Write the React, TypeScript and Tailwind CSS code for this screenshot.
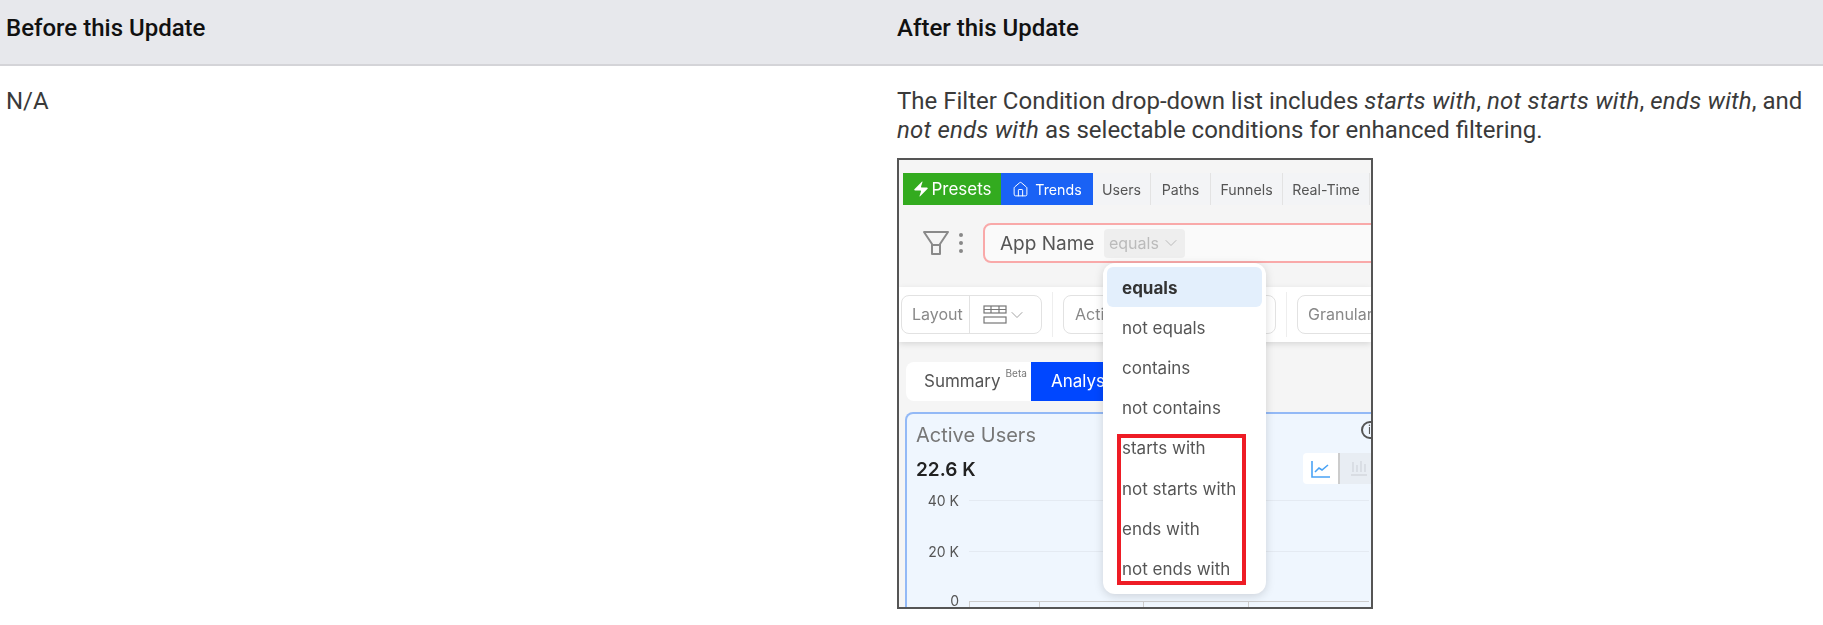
import { ChevronDown, Home, Zap } from "lucide-react";

const tabs = [
  { label: "Users", width: "w-[58px]" },
  { label: "Paths", width: "w-[60px]" },
  { label: "Funnels", width: "w-[72px]" },
  { label: "Real-Time", width: "w-[87px]" },
];

const conditions = [
  "equals",
  "not equals",
  "contains",
  "not contains",
  "starts with",
  "not starts with",
  "ends with",
  "not ends with",
];

function FilterIcon() {
  return (
    <svg className="shrink-0" width="28" height="26" viewBox="0 0 28 26" fill="none" stroke="#8a8a8a" strokeWidth="2">
      <path d="M2 2h24L18 14v10h-8V14z" strokeLinejoin="round" />
      <path d="M10 15h8" />
    </svg>
  );
}

function TableIcon() {
  return (
    <svg width="24" height="20" viewBox="0 0 24 20" fill="none" stroke="#777" strokeWidth="1.2">
      <rect x="1" y="1" width="22" height="7" />
      <path d="M1 4.5h22M8 1v7M16 1v7" />
      <rect x="1" y="12" width="22" height="6" />
    </svg>
  );
}

function ChartLineIcon() {
  return (
    <svg width="20" height="18" viewBox="0 0 20 18" fill="none" stroke="#4aa3f5" strokeWidth="1.6">
      <path d="M1 1v16h18" />
      <path d="M4 12l4-4 3 2 6-5" />
    </svg>
  );
}

function ChartBarIcon() {
  return (
    <svg width="18" height="18" viewBox="0 0 18 18" fill="none" stroke="#d4d8de" strokeWidth="1.4">
      <path d="M3 2v10M7 5v7M11 1v11M15 4v8M1 15h16" />
    </svg>
  );
}

function FilterMenu() {
  return (
    <div className="absolute left-[204px] top-[103px] w-[163px] h-[331px] rounded-xl bg-white p-[4px] shadow-[0_2px_10px_rgba(0,0,0,0.15)]">
      {conditions.map((c, i) => (
        <div
          key={c}
          className={`h-[40.2px] flex items-center pl-[15px] text-[17px] rounded-md ${
            i === 0 ? "bg-[#e3effc] font-bold text-[#333]" : "text-[#555]"
          }`}
        >
          <span className="translate-y-[1px]">{c}</span>
        </div>
      ))}
      <div className="absolute left-[14px] top-[171px] w-[129px] h-[151px] border-[4px] border-[#ee1c25]" />
    </div>
  );
}

function DashboardShot() {
  return (
    <div className="relative mt-[13px] w-[476px] h-[451px] border-2 border-[#555] bg-[#f5f5f5] overflow-hidden font-['Inter',sans-serif] blur-[0.4px]">
      {/* nav tabs */}
      <div className="ml-[4px] mt-[13px] flex h-[32px] text-[14.2px]">
        <div className="w-[98px] bg-[#33ab1f] text-white flex items-center justify-center gap-[1px] text-[17px]">
          <Zap size={18} fill="white" strokeWidth={0} />
          Presets
        </div>
        <div className="w-[92px] bg-[#1a62f5] text-white flex items-center justify-center gap-[6px]">
          <Home size={17} strokeWidth={1.4} />
          Trends
        </div>
        {tabs.map((t) => (
          <div
            key={t.label}
            className={`${t.width} bg-[#f3f4f6] border-r border-[#e3e3e3] text-[#555] flex items-center justify-center`}
          >
            {t.label}
          </div>
        ))}
      </div>

      {/* filter row */}
      <div className="flex items-center mt-[18px] ml-[23px] h-[40px]">
        <FilterIcon />
        <div className="ml-[9px] flex flex-col gap-[4px] shrink-0">
          <span className="size-[4px] rounded-full bg-[#888]" />
          <span className="size-[4px] rounded-full bg-[#888]" />
          <span className="size-[4px] rounded-full bg-[#888]" />
        </div>
        <div className="ml-[20px] w-[420px] h-[40px] shrink-0 flex items-center rounded-lg border-2 border-[#f9a9a9] bg-[#fafafa] pl-[15px] text-[19px] text-[#555]">
          App Name
          <span className="ml-[10px] h-[29px] w-[81px] flex items-center justify-center gap-[2px] rounded bg-[#eeeeee] text-[16px] text-[#bbb]">
            equals
            <ChevronDown size={20} strokeWidth={1.2} />
          </span>
        </div>
      </div>

      {/* toolbar */}
      <div className="mt-[24px] h-[55px] bg-white flex items-center pl-[2px] shadow-[0_2px_6px_rgba(0,0,0,0.12)] text-[16px] text-[#888]">
        <div className="w-[141px] h-[39px] rounded-lg border border-[#e2e2e2] flex items-center shrink-0">
          <span className="w-[68px] pl-[10px] border-r border-[#e2e2e2] h-full flex items-center">Layout</span>
          <span className="ml-[13px] flex items-center text-[#999]">
            <TableIcon />
            <ChevronDown size={20} strokeWidth={1.1} />
          </span>
        </div>
        <div className="ml-[10px] w-px h-[45px] bg-[#eeeeee] shrink-0" />
        <div className="ml-[10px] w-[213px] h-[39px] rounded-lg border border-[#e2e2e2] flex items-center pl-[11px] shrink-0">
          Acti
        </div>
        <div className="ml-[10px] w-px h-[45px] bg-[#eeeeee] shrink-0" />
        <div className="ml-[10px] w-[120px] h-[39px] rounded-l-lg border border-[#e2e2e2] flex items-center pl-[10px] shrink-0">
          Granular
        </div>
      </div>

      {/* summary tabs */}
      <div className="ml-[7px] mt-[20px] flex h-[39px] text-[17px]">
        <div className="w-[125px] bg-white rounded-l-lg text-[#555] flex items-center pl-[18px]">
          Summary
          <sup className="ml-[5px] -mt-[8px] text-[10px] text-[#777]">Beta</sup>
        </div>
        <div className="w-[100px] bg-[#0047ff] text-white flex items-center pl-[20px]">Analysis</div>
      </div>

      {/* chart card */}
      <div className="ml-[6px] mt-[11px] w-[480px] h-[220px] rounded-t-lg border-2 border-b-0 border-[#93b9f6] bg-[#eff6fe] pl-[9px] pt-[7px] relative">
        <div className="text-[20px] leading-[28px] text-[#777]">Active Users</div>
        <div className="mt-[9px] text-[19px] leading-[24px] font-semibold text-[#222]">22.6 K</div>
        <div className="absolute left-[454px] top-[7px] size-[18px] rounded-full border-2 border-[#555] text-[12px] pl-[5px] leading-[14px] text-[#555]">
          i
        </div>
        <div className="absolute left-[396px] top-[39px] flex h-[31px]">
          <span className="w-[37px] bg-white rounded-l flex items-center justify-center border-r-2 border-[#ccc]">
            <ChartLineIcon />
          </span>
          <span className="w-[37px] bg-[#e8edf3] flex items-center justify-center">
            <ChartBarIcon />
          </span>
        </div>
        <div className="mt-[8px] flex flex-col gap-[31px] text-[14px] text-[#555]">
          <div className="flex items-center h-[20px]">
            <span className="w-[43px] text-right">40 K</span>
            <span className="ml-[10px] w-[400px] h-px bg-[#e4eaf2]" />
          </div>
          <div className="flex items-center h-[20px]">
            <span className="w-[43px] text-right">20 K</span>
            <span className="ml-[10px] w-[400px] h-px bg-[#e4eaf2]" />
          </div>
          <div className="flex items-center h-[20px] -mt-[2px]">
            <span className="w-[43px] text-right">0</span>
            <span className="ml-[10px] w-[400px] h-[10px] mt-[12px] border-t border-l border-[#ccc] bg-[linear-gradient(to_right,transparent_69px,#ccc_69px,#ccc_70px,transparent_70px,transparent_173px,#ccc_173px,#ccc_174px,transparent_174px,transparent_278px,#ccc_278px,#ccc_279px,transparent_279px)]" />
          </div>
        </div>
      </div>

      <FilterMenu />
    </div>
  );
}

export default function App() {
  return (
    <div className="w-[1823px] h-[625px] bg-white font-['Roboto',sans-serif] overflow-hidden">
      <div className="grid grid-cols-[889px_934px] h-[66px] bg-[#e7e8ec] border-b-2 border-[#d4d4d8] text-[24px] font-medium text-[#111]">
        <div className="pl-[6px] pt-[14px] leading-[29px]">Before this Update</div>
        <div className="pl-[8px] pt-[14px] leading-[29px]">After this Update</div>
      </div>
      <div className="grid grid-cols-[889px_934px] text-[24px] leading-[29px] text-[#3a3a3a]">
        <div className="pl-[6px] pt-[21px]">N/A</div>
        <div className="pl-[8px] pt-[21px]">
          <p>
            The Filter Condition drop-down list includes <em className="tracking-[0.2px]">starts with</em>,{" "}
            <em className="tracking-[0.2px]">not starts with</em>, <em className="tracking-[0.2px]">ends with</em>, and{" "}
            <em className="tracking-[0.2px]">not ends with</em> as selectable conditions for enhanced filtering.
          </p>
          <DashboardShot />
        </div>
      </div>
    </div>
  );
}
